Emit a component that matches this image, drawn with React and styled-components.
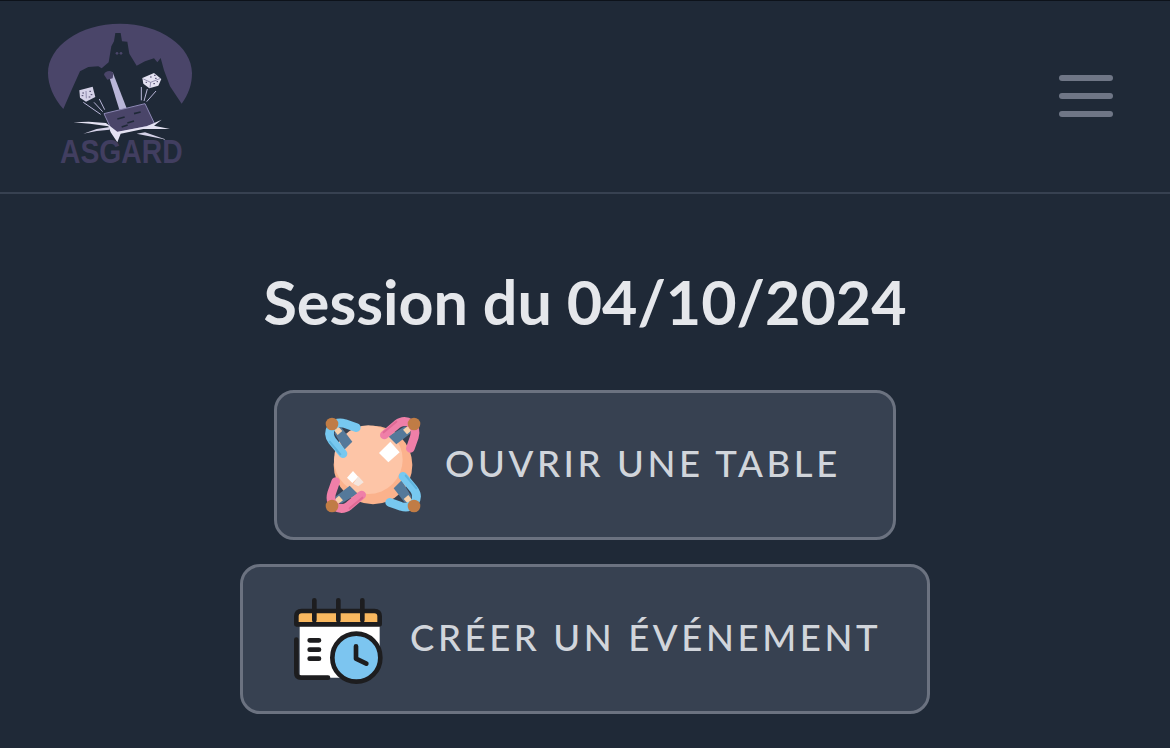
import React from "react";
import styled, { createGlobalStyle } from "styled-components";

const GlobalStyle = createGlobalStyle`
  html, body {
    margin: 0;
    height: 100%;
    background: #1f2937;
    overflow: hidden;
  }
  body {
    font-family: "Lato", "Open Sans", sans-serif;
  }
`;

const Page = styled.div`
  min-height: 748px;
  background: #1f2937;
  border-top: 1px solid #0d121a;
  box-sizing: border-box;
`;

const Header = styled.header`
  height: 193px;
  box-sizing: border-box;
  padding: 22px 57px 0 48px;
  display: flex;
  justify-content: space-between;
  align-items: flex-start;
  border-bottom: 2px solid #374151;
`;

const MenuButton = styled.button`
  margin-top: 52px;
  padding: 0;
  width: 54px;
  display: flex;
  flex-direction: column;
  gap: 12px;
  background: none;
  border: none;
`;

const MenuBar = styled.span`
  display: block;
  height: 6px;
  border-radius: 3px;
  background: #6f7686;
`;

const Main = styled.main`
  display: flex;
  flex-direction: column;
  align-items: center;
`;

const Title = styled.h1`
  margin: 71px 0 51px;
  font-size: 61px;
  line-height: 74px;
  font-weight: 700;
  color: #e5e7eb;
`;

const ActionList = styled.div`
  display: flex;
  flex-direction: column;
  align-items: center;
  gap: 24px;
`;

const ActionButton = styled.button`
  height: 150px;
  width: ${(p) => p.$width}px;
  box-sizing: border-box;
  display: flex;
  align-items: center;
  gap: ${(p) => p.$gap}px;
  background: #374151;
  border: 3px solid #6b7280;
  border-radius: 20px;
  padding: 0 0 0 ${(p) => p.$left}px;
  font-family: inherit;
`;

const ActionLabel = styled.span`
  margin-bottom: 4px;
  font-size: 36.5px;
  font-weight: 500;
  letter-spacing: 3.6px;
  color: #d1d5db;
  text-transform: uppercase;
  white-space: nowrap;
`;

const CalendarSvg = styled.svg`
  margin-top: 5px;
`;

const Logo = () => (
  <svg width="144" height="150" viewBox="54 40 432 450">
    <path
      d="M100 298 C70 265 54 225 54 190 C54 110 150 42 270 42 C390 42 486 110 486 190 C486 225 475 255 455 282 L420 230 L402 182 L392 145 L382 158 L372 146 L345 155 L320 168 L298 132 L292 96 L276 95 L272 70 L256 70 L252 95 L244 110 L236 158 L215 176 L205 170 L175 172 L150 185 L125 240 Z"
      fill="#4a4569"
    />
    <circle cx="261" cy="131" r="4" fill="#4a4569" />
    <circle cx="273" cy="131" r="4" fill="#4a4569" />
    <path d="M234 190 L248 188 L290 296 L268 300 Z" fill="#b9b6d8" />
    <path d="M222 195 C224 182 248 180 250 192 L248 206 L232 210 Z" fill="#4a4569" />
    <path d="M222 312 L345 282 L375 345 L250 372 Z" fill="#4a4569" stroke="#8d88b5" strokeWidth="3" />
    <path d="M262 328 l22 -6 M292 340 l20 -6 M312 312 l20 -5 M275 352 l18 -6" stroke="#1f2937" strokeWidth="5" />
    <path
      d="M130 338 L180 342 L235 350 L242 368 L262 398 L272 372 L340 358 L420 358 L372 348 L395 330 L350 350 L262 366 L228 340 L176 336 Z"
      fill="#e4e2f2"
    />
    <path d="M160 372 L200 358 L240 352 L238 360 L200 364 Z" fill="#d5d2e8" />
    <path d="M320 372 L410 390 L345 368 Z" fill="#d5d2e8" />
    <path d="M148 242 L188 231 L196 262 L168 276 L150 264 Z" fill="#d5d2e8" />
    <path d="M168 244 l1 22" stroke="#6b6690" strokeWidth="2" />
    <path d="M157 250 h5 M155 258 h5 M178 245 h5 M182 255 h5 M176 262 h5" stroke="#4a4569" strokeWidth="3" />
    <path d="M337 205 L372 190 L394 208 L385 228 L358 236 L340 222 Z" fill="#e4e2f2" />
    <path d="M340 208 l22 10 l30 -12 M362 218 l-2 16" stroke="#6b6690" strokeWidth="2" fill="none" />
    <path d="M360 202 h5 M372 197 h5 M375 206 h5 M347 218 h4 M370 222 h5 M380 216 h4" stroke="#4a4569" strokeWidth="3" />
    <path
      d="M160 278 L212 314 M192 278 L218 306 M208 268 L224 300 M334 232 L334 272 M352 238 L342 274 M378 244 L350 276"
      stroke="#b9b6d8"
      strokeWidth="3"
    />
    <text transform="translate(90 460) scale(1 1.15)" fontFamily="Liberation Sans, sans-serif" fontWeight="700" fontSize="85" fill="#413e60">
      ASGARD
    </text>
  </svg>
);

const Guest = ({ color, shade }) => (
  <g>
    <path d="M74 84 L94 66 L128 110 L104 134 Z" fill="#55799a" />
    <path d="M70 72 L84 62 L98 78 L84 90 Z" fill="#f7cfa9" />
    <path
      d="M100 146 L68 108 C56 92 58 78 66 66 C76 54 92 52 106 56 L140 68"
      fill="none"
      stroke={color}
      strokeWidth="26"
      strokeLinecap="round"
      strokeLinejoin="round"
    />
    <path d="M60 110 L92 148" stroke={shade} strokeWidth="6" strokeLinecap="round" />
    <circle cx="67" cy="57" r="19" fill="#c07c45" />
  </g>
);

const TableIcon = () => (
  <svg width="108" height="108" viewBox="28 18 324 324">
    <circle cx="190" cy="180" r="118" fill="#fbb28c" />
    <circle cx="176" cy="164" r="103" fill="#fdc5a7" />
    <path d="M242 110 L270 142 L236 172 L208 144 Z" fill="#ffffff" />
    <path d="M130 198 L146 216 L128 234 L112 218 Z" fill="#ffffff" />
    <path d="M146 214 L162 232 L146 244 L131 236 Z" fill="#f4e6de" />
    <Guest color="#77c8f0" shade="#5fb4de" />
    <g transform="rotate(180 190 180)">
      <Guest color="#77c8f0" shade="#5fb4de" />
    </g>
    <g transform="rotate(90 190 180)">
      <Guest color="#ef7fa8" shade="#e06a95" />
    </g>
    <g transform="rotate(270 190 180)">
      <Guest color="#ef7fa8" shade="#e06a95" />
    </g>
  </svg>
);

const CalendarIcon = () => (
  <CalendarSvg width="90" height="88" viewBox="40 34 270 262">
    <path d="M60 115 H300 V200 L190 272 H60 Z" fill="#ffffff" />
    <path d="M50 112 V88 Q50 72 66 72 H284 Q300 72 300 88 V112 Z" fill="#f9b85f" stroke="#1d1d1f" strokeWidth="14" strokeLinejoin="round" />
    <path d="M104 40 V100 M176 40 V100 M248 40 V100" stroke="#1d1d1f" strokeWidth="14" strokeLinecap="round" />
    <path d="M50 158 V258 Q50 272 64 272 H145" stroke="#1d1d1f" strokeWidth="14" strokeLinecap="round" fill="none" />
    <path d="M90 160 H118 M90 188 H118 M90 215 H118" stroke="#1d1d1f" strokeWidth="14" strokeLinecap="round" />
    <circle cx="230" cy="212" r="72" fill="#7cc5f0" stroke="#1d1d1f" strokeWidth="14" />
    <path d="M229 178 V215 L260 230" stroke="#1d1d1f" strokeWidth="14" strokeLinecap="round" strokeLinejoin="round" fill="none" />
  </CalendarSvg>
);

export default function App() {
  return (
    <>
      <GlobalStyle />
      <Page>
        <Header>
          <Logo />
          <MenuButton aria-label="Menu">
            <MenuBar />
            <MenuBar />
            <MenuBar />
          </MenuButton>
        </Header>
        <Main>
          <Title>Session du 04/10/2024</Title>
          <ActionList>
            <ActionButton $width={622} $left={42} $gap={18}>
              <TableIcon />
              <ActionLabel>Ouvrir une table</ActionLabel>
            </ActionButton>
            <ActionButton $width={690} $left={50} $gap={27}>
              <CalendarIcon />
              <ActionLabel>Créer un événement</ActionLabel>
            </ActionButton>
          </ActionList>
        </Main>
      </Page>
    </>
  );
}
